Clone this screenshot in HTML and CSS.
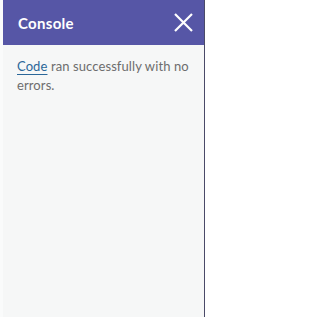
FILE: index.html
```html
<!DOCTYPE html>
<html>
<head>
<meta charset="utf-8">
<link rel="stylesheet" href="styles.css">
</head>
<body>
<div class="panel">
  <header class="bar">
    <span class="title">Console</span>
    <button class="close" aria-label="Close">
      <svg width="19" height="19" viewBox="0 0 19 19"><path d="M1 1L18 18M18 1L1 18" stroke="#fff" stroke-width="2.2" fill="none"/></svg>
    </button>
  </header>
  <div class="content">
    <p class="msg"><a class="link" href="#">Code</a> ran successfully with no errors.</p>
  </div>
</div>
</body>
</html>
```
FILE: styles.css
```css
html, body { margin: 0; padding: 0; height: 100%; }
body { background: #ffffff; font-family: "Lato", "Liberation Sans", sans-serif; }
.panel {
  width: 205px;
  height: 100%;
  display: flex;
  flex-direction: column;
  border-left: 3px solid #fafbfb;
  border-right: 1px solid #4a4a68;
  background: #f6f7f7;
  box-sizing: border-box;
}
.bar {
  height: 45px;
  background: #5656a6;
  display: flex;
  align-items: center;
  justify-content: space-between;
  padding: 0 11px 0 15px;
  flex-shrink: 0;
}
.title { color: #fff; font-weight: 700; font-size: 15px; letter-spacing: 0.3px; }
.close { background: none; border: 0; padding: 0; display: flex; }
.content { padding: 12px 8px 12px 14px; }
.msg { margin: 0; font-size: 13px; line-height: 19px; letter-spacing: 0.1px; color: #6d6d6d; }
.link { color: #2b6799; text-decoration: underline; text-decoration-thickness: 1px; text-underline-offset: 3px; }
```
